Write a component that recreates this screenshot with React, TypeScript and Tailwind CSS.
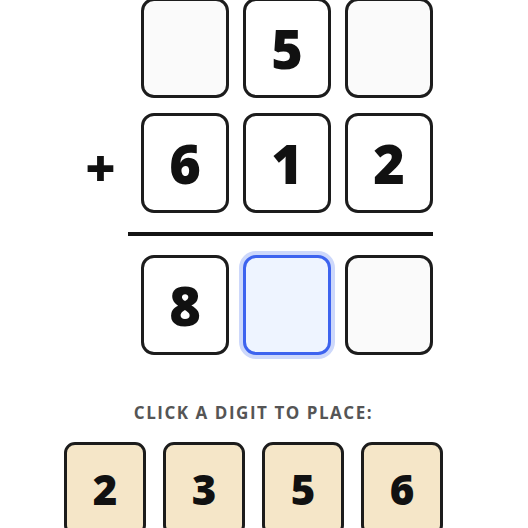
const TOP = [null, 5, null];
const ADDEND = [6, 1, 2];
const RESULT = [8, null, null];
const TILES = [2, 3, 5, 6];

const digitFont = "font-['Open_Sans','Noto_Sans',sans-serif]";

function Cell({ value, active }: { value: number | null; active?: boolean }) {
  const base =
    'flex h-[100px] w-[88px] items-center justify-center rounded-[13px] border-[3px] text-[54px] font-extrabold leading-none text-[#111] ' +
    digitFont;
  if (active) {
    return (
      <div className={base + ' border-[#3d63ef] bg-[#eef4ff] shadow-[0_0_0_4px_#cdd8fb]'}>{value}</div>
    );
  }
  return (
    <div className={base + ' border-[#1c1c1c] ' + (value === null ? 'bg-[#fafafa]' : 'bg-white')}>
      {value}
    </div>
  );
}

export default function App() {
  return (
    <div className="h-[528px] w-[528px] overflow-hidden bg-white">
      <div className="flex w-[507px] flex-col items-center">
        {/* equation */}
        <div className="-mt-[2px] grid grid-cols-[53px_88px_88px_88px] gap-x-[14px]">
          <div />
          {TOP.map((v, i) => (
            <Cell key={i} value={v} />
          ))}

          <div
            className={
              'mt-[15px] flex items-center justify-center pt-[8px] text-[52px] font-extrabold leading-none text-[#111] ' +
              digitFont
            }
          >
            +
          </div>
          {ADDEND.map((v, i) => (
            <div key={i} className="mt-[15px]">
              <Cell value={v} />
            </div>
          ))}

          <div className="col-span-4 ml-[54px] mt-[19px] h-[4px] bg-[#141414]" />

          <div />
          {RESULT.map((v, i) => (
            <div key={i} className="mt-[19px]">
              <Cell value={v} active={i === 1} />
            </div>
          ))}
        </div>

        {/* picker */}
        <div className="mt-[49px] font-['Open_Sans',sans-serif] text-[17px] font-bold uppercase leading-none tracking-[0.09em] text-[#555]">
          Click a digit to place:
        </div>
        <div className="mt-[21px] flex gap-[17px]">
          {TILES.map((d) => (
            <button
              key={d}
              className={
                'flex h-[94px] w-[82px] items-center justify-center rounded-[11px] border-[3px] border-[#1c1c1c] bg-[#f5e6c8] text-[42px] font-extrabold leading-none text-[#111] ' +
                digitFont
              }
            >
              {d}
            </button>
          ))}
        </div>
      </div>
    </div>
  );
}
